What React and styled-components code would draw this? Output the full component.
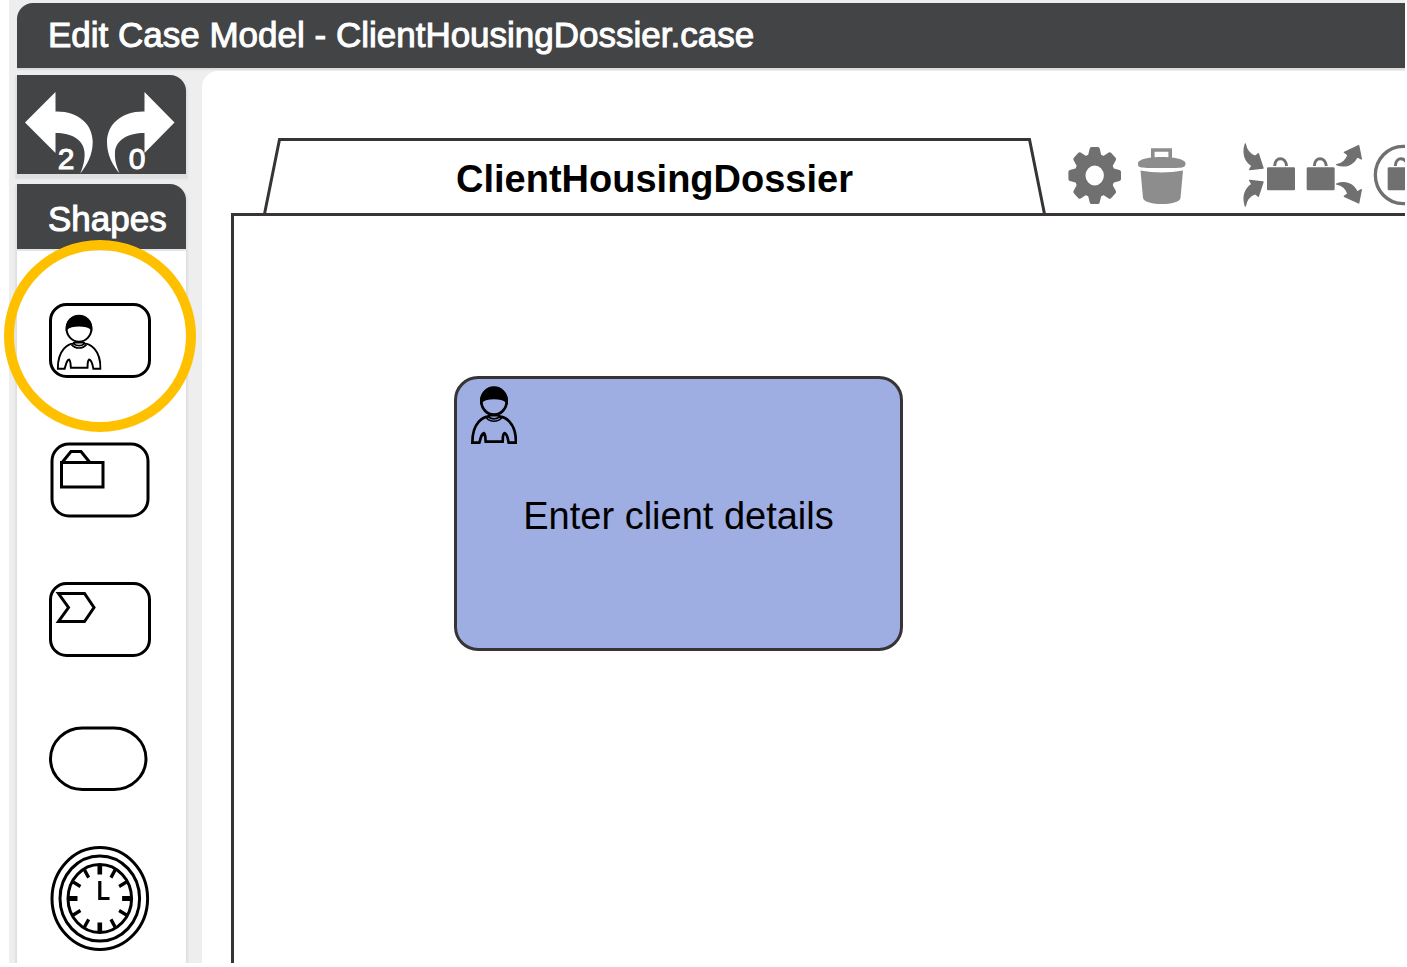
import React from "react";
import styled, { createGlobalStyle } from "styled-components";

const INK = "#383435";
const DARK = "#434446";
const TOOL = "#707070";

const GlobalStyle = createGlobalStyle`
  *, *::before, *::after { box-sizing: border-box; }
  body {
    margin: 0;
    background: #fff;
    font-family: "Liberation Sans", Arial, Helvetica, sans-serif;
  }
  button {
    margin: 0;
    padding: 0;
    border: 0;
    background: none;
    color: inherit;
    font: inherit;
    cursor: pointer;
  }
  svg { display: block; }
`;

const Page = styled.div`
  height: 100vh;
  padding: 0 2px 4px 9px;
  overflow: hidden;
`;

const Editor = styled.div`
  display: flex;
  flex-direction: column;
  height: 100%;
  padding: 3px 0 0 8px;
  background: #eeeeee;
  clip-path: inset(0 0 0 -9px);
`;

const TitleBar = styled.header`
  flex: none;
  display: flex;
  align-items: center;
  height: 65px;
  padding: 0 0 2px 31px;
  border-radius: 16px 0 0 0;
  background: ${DARK};
  box-shadow: 0 2px 1px #dcdcdc;
`;

const Title = styled.h1`
  margin: 0;
  color: #fff;
  font-size: 35px;
  font-weight: 400;
  line-height: 40px;
  white-space: nowrap;
  -webkit-text-stroke: 1px #fff;
`;

const Workspace = styled.div`
  flex: 1;
  display: flex;
  gap: 16px;
  min-height: 0;
  padding-top: 3px;
`;

const Sidebar = styled.aside`
  flex: none;
  display: flex;
  flex-direction: column;
  gap: 10px;
  width: 169px;
  padding-top: 4px;
`;

const HistoryPanel = styled.div`
  flex: none;
  display: flex;
  justify-content: center;
  position: relative;
  height: 99px;
  border-radius: 0 16px 0 0;
  background: ${DARK};
  box-shadow: 0 3px 2px 2px #dfdfdf;
`;

const HistoryButton = styled.button`
  display: flex;
  justify-content: center;
  align-items: flex-end;
  position: relative;
  width: 71px;
  color: #fff;
  font-size: 30px;
  line-height: 30px;
  -webkit-text-stroke: 1px #fff;
`;

const HistoryArrow = styled.svg`
  position: absolute;
  top: 0;
  ${(p) => (p.$side === "left" ? "right: 0;" : "left: 0;")}
`;

const Count = styled.span`
  position: relative;
`;

const Palette = styled.section`
  flex: 1;
  display: flex;
  flex-direction: column;
  min-height: 0;
  border-radius: 0 16px 0 0;
  background: #fff;
  box-shadow: 0 3px 2px 2px #dfdfdf;
`;

const PaletteTitle = styled.h2`
  flex: none;
  display: flex;
  align-items: center;
  height: 65px;
  margin: 0;
  padding: 4px 0 0 31px;
  border-radius: 0 16px 0 0;
  background: ${DARK};
  box-shadow: 0 2px 1px #e4e4e4;
  color: #fff;
  font-size: 35px;
  font-weight: 400;
  line-height: 40px;
  -webkit-text-stroke: 1px #fff;
`;

const ShapeList = styled.div`
  display: flex;
  flex-direction: column;
  align-items: center;
  gap: 32px;
  padding-top: 37px;
`;

const ShapeButton = styled.button`
  position: relative;
  width: 109px;
  height: 108px;
`;

const Highlight = styled.span`
  position: absolute;
  top: -46px;
  left: -43px;
  width: 192px;
  height: 192px;
  border: 10px solid #ffc000;
  border-radius: 50%;
  pointer-events: none;
`;

const Canvas = styled.main`
  flex: 1;
  display: flex;
  flex-direction: column;
  min-width: 0;
  padding: 67px 0 0 29px;
  overflow: hidden;
  border-radius: 16px 0 0 0;
  background: #fff;
`;

const PlanHeader = styled.div`
  flex: none;
  display: flex;
  align-items: center;
  height: 75px;
  padding-left: 32px;
`;

const PlanTab = styled.div`
  flex: none;
  display: flex;
  justify-content: center;
  align-items: center;
  position: relative;
  width: 783px;
  height: 75px;
  padding-top: 6px;
`;

const TabOutline = styled.svg`
  position: absolute;
  top: 0;
  left: 0;
`;

const PlanName = styled.h3`
  margin: 0;
  color: #000;
  font-size: 38px;
  font-weight: 700;
  line-height: 44px;
  white-space: nowrap;
`;

const Tools = styled.div`
  flex: none;
  display: flex;
  gap: ${(p) => p.$gap}px;
  margin-left: ${(p) => p.$start}px;
`;

const ToolButton = styled.button`
  flex: none;
`;

const CasePlan = styled.div`
  flex: 1;
  position: relative;
  border: solid ${INK};
  border-width: 3px 0 0 3px;
`;

const TaskNode = styled.button`
  display: flex;
  justify-content: center;
  align-items: center;
  position: absolute;
  top: 160px;
  left: 220px;
  width: 449px;
  height: 275px;
  padding-top: 4px;
  border: 3px solid ${INK};
  border-radius: 24px;
  background: #9eade2;
  color: #000;
  font-size: 38px;
  line-height: 44px;
`;

const TaskMarker = styled.span`
  position: absolute;
  top: 7px;
  left: 14px;
`;

function Person({ stroke = 6, ...rest }) {
  return (
    <svg viewBox="20 17 138 172" preserveAspectRatio="none" fill="none" stroke="#000" strokeWidth={stroke} {...rest}>
      <ellipse cx="89" cy="62" rx="38" ry="40" />
      <path d="M51 63C51 10 127 10 127 63C112 49 66 49 51 63Z" fill="#000" />
      <path d="M73 103V108C58 108 24 124 24 185H45C50 168 52 158 59 157C64 162 63 174 64 182H115C116 174 114 162 120 157C127 158 130 168 133 185H155C155 124 121 108 105 108V103" />
      <path d="M73 105H105M66 111C78 125 100 125 112 111M73 109C82 116 96 116 105 109" strokeWidth="5" />
    </svg>
  );
}

function TaskShape() {
  return (
    <svg width="109" height="108" viewBox="47 286 109 108" fill="none" stroke="#000" strokeWidth="3">
      <rect x="50.5" y="304.500" width="99" height="72" rx="16" />
      <Person x="56.500" y="314" width="45" height="56" stroke={6} />
    </svg>
  );
}

function StageShape() {
  return (
    <svg width="109" height="108" viewBox="47 426 109 108" fill="none" stroke="#000" strokeWidth="3">
      <rect x="52" y="444" width="96" height="72" rx="17" />
      <path d="M61.5 462.5H103V487H61.5ZM62.5 462L71 451.5H81L89.5 462" />
    </svg>
  );
}

function ProcessShape() {
  return (
    <svg width="109" height="108" viewBox="47 566 109 108" fill="none" stroke="#000" strokeWidth="3">
      <rect x="50.5" y="583.5" width="99" height="72" rx="16" />
      <path d="M58.5 593.5H84.5L94 607.5L84.5 621.5H58.5L68.5 607.5Z" />
    </svg>
  );
}

function MilestoneShape() {
  return (
    <svg width="109" height="108" viewBox="47 706 109 108" fill="none" stroke="#000" strokeWidth="3">
      <rect x="50.5" y="728" width="95.5" height="61.5" rx="32" ry="31" />
    </svg>
  );
}

function TimerShape() {
  const minor = [30, 60, 120, 150, 210, 240, 300, 330];
  const major = [0, 90, 180, 270];
  return (
    <svg width="109" height="108" viewBox="47 846 109 108" fill="none" stroke="#000" strokeWidth="3">
      <ellipse cx="99.8" cy="898.5" rx="47.8" ry="51" />
      <ellipse cx="99.8" cy="898.5" rx="39.8" ry="42.6" />
      <ellipse cx="99.8" cy="898.5" rx="31.8" ry="34" />
      <g transform="translate(99.8 898.5) scale(.93 1)">
        {minor.map((a) => (
          <path key={a} d="M0-33V-24" transform={`rotate(${a})`} strokeWidth="3.6" />
        ))}
        {major.map((a) => (
          <path key={a} d="M0-34V-24" transform={`rotate(${a})`} strokeWidth="5" />
        ))}
      </g>
      <path d="M99.8 881V898.5H109.5" strokeWidth="3.2" />
    </svg>
  );
}

function GearIcon() {
  return (
    <svg width="56" height="67" viewBox="1067 142 56 67" fill={TOOL}>
      <g transform="translate(1094.7 175.5) scale(.92 1)">
        <circle r="15.9" fill="none" stroke={TOOL} strokeWidth="11.8" />
        {[0, 45, 90, 135, 180, 225, 270, 315].map((a) => (
          <path key={a} d="M-7.5-19L-5.4-27Q-5-28.6-3.5-28.6H3.5Q5-28.6 5.4-27L7.5-19Z" transform={`rotate(${a})`} />
        ))}
      </g>
    </svg>
  );
}

function TrashIcon() {
  return (
    <svg width="50" height="67" viewBox="1137 142 50 67" fill="#8d8d8d">
      <path d="M1152.8 159V150H1170.2V159" fill="none" stroke="#8d8d8d" strokeWidth="3.6" />
      <path d="M1138 163C1139 155 1184 155 1185.5 163C1186 169 1179 167.5 1175 168H1149C1144 167.5 1137 169 1138 163Z" />
      <path d="M1140.5 170.5C1154 173 1169 173 1183 170.5L1180.5 198C1179 206 1145 206 1143 198Z" />
    </svg>
  );
}

function Bag({ x }) {
  return (
    <g>
      <rect x={x} y="88" width="84" height="69" rx="4" fill={TOOL} />
      <path d={`M${x + 23} 84C${x + 24} 55 ${x + 56} 55 ${x + 59} 84`} fill="none" stroke={TOOL} strokeWidth="9" />
    </g>
  );
}

function ImportIcon() {
  const arrow = "M31 18C22 46 30 70 51 83L44 95L84 90L70 47L61 55C47 50 35 42 31 18Z";
  return (
    <svg width="53" height="67" viewBox="24 12 159 201" fill={TOOL}>
      <g stroke={TOOL} strokeWidth="4" strokeLinejoin="round">
        <path d={arrow} />
        <path d={arrow} transform="translate(0 222) scale(1 -1)" />
      </g>
      <Bag x={96} />
    </svg>
  );
}

function ExportIcon() {
  const arrow = "M110 80C128 77 139 66 144 51L133 43L176 23L184 63L171 56C160 82 134 89 110 80Z";
  return (
    <svg width="57" height="67" viewBox="18 12 171 201" fill={TOOL}>
      <g stroke={TOOL} strokeWidth="4" strokeLinejoin="round">
        <path d={arrow} />
        <path d={arrow} transform="translate(0 218) scale(1 -1)" />
      </g>
      <Bag x={20} />
    </svg>
  );
}

function CaseIcon() {
  return (
    <svg width="60" height="67" viewBox="219 12 180 201">
      <ellipse cx="309" cy="111" rx="83" ry="86" fill="none" stroke={TOOL} strokeWidth="10" />
      <Bag x={263} />
    </svg>
  );
}

const shapes = [
  { name: "Human task", Icon: TaskShape, highlighted: true },
  { name: "Stage", Icon: StageShape },
  { name: "Process task", Icon: ProcessShape },
  { name: "Milestone", Icon: MilestoneShape },
  { name: "Timer event", Icon: TimerShape },
];

export default function App() {
  return (
    <Page>
      <GlobalStyle />
      <Editor>
        <TitleBar>
          <Title>Edit Case Model - ClientHousingDossier.case</Title>
        </TitleBar>
        <Workspace>
          <Sidebar>
            <HistoryPanel>
              <HistoryButton aria-label="Undo">
                <HistoryArrow $side="left" width="85" height="99" viewBox="17 75 85 99" fill="#fff">
                  <path d="M25 122.5L55.5 92V111.5C78 111 92.7 124 92.7 142C92.7 155 87 165 80.3 173.5C83.5 165 85 160 84.5 152C83.5 140 72 133 55.5 133V153Z" />
                </HistoryArrow>
                <Count>2</Count>
              </HistoryButton>
              <HistoryButton aria-label="Redo">
                <HistoryArrow $side="right" width="85" height="99" viewBox="102 75 85 99" fill="#fff">
                  <path d="M174.5 122.5L144.5 92V111.5C122 111 107 124 107 142C107 155 112.5 165 119.5 173.5C116 165 114.5 160 115 152C116 140 128 133 144.5 133V153Z" />
                </HistoryArrow>
                <Count>0</Count>
              </HistoryButton>
            </HistoryPanel>
            <Palette>
              <PaletteTitle>Shapes</PaletteTitle>
              <ShapeList>
                {shapes.map(({ name, Icon, highlighted }) => (
                  <ShapeButton key={name} aria-label={name}>
                    <Icon />
                    {highlighted && <Highlight />}
                  </ShapeButton>
                ))}
              </ShapeList>
            </Palette>
          </Sidebar>
          <Canvas>
            <PlanHeader>
              <PlanTab>
                <TabOutline width="783" height="75" viewBox="263 138 783 75" fill="none" stroke={INK} strokeWidth="3">
                  <path d="M264.5 214L279.5 139.5H1029.5L1044.5 214" />
                </TabOutline>
                <PlanName>ClientHousingDossier</PlanName>
              </PlanTab>
              <Tools $gap={14} $start={21}>
                <ToolButton aria-label="Properties"><GearIcon /></ToolButton>
                <ToolButton aria-label="Delete"><TrashIcon /></ToolButton>
              </Tools>
              <Tools $gap={10} $start={56}>
                <ToolButton aria-label="Input parameters"><ImportIcon /></ToolButton>
                <ToolButton aria-label="Output parameters"><ExportIcon /></ToolButton>
                <ToolButton aria-label="Case file"><CaseIcon /></ToolButton>
              </Tools>
            </PlanHeader>
            <CasePlan>
              <TaskNode>
                <TaskMarker>
                  <Person width="46" height="58" stroke={8} />
                </TaskMarker>
                Enter client details
              </TaskNode>
            </CasePlan>
          </Canvas>
        </Workspace>
      </Editor>
    </Page>
  );
}
